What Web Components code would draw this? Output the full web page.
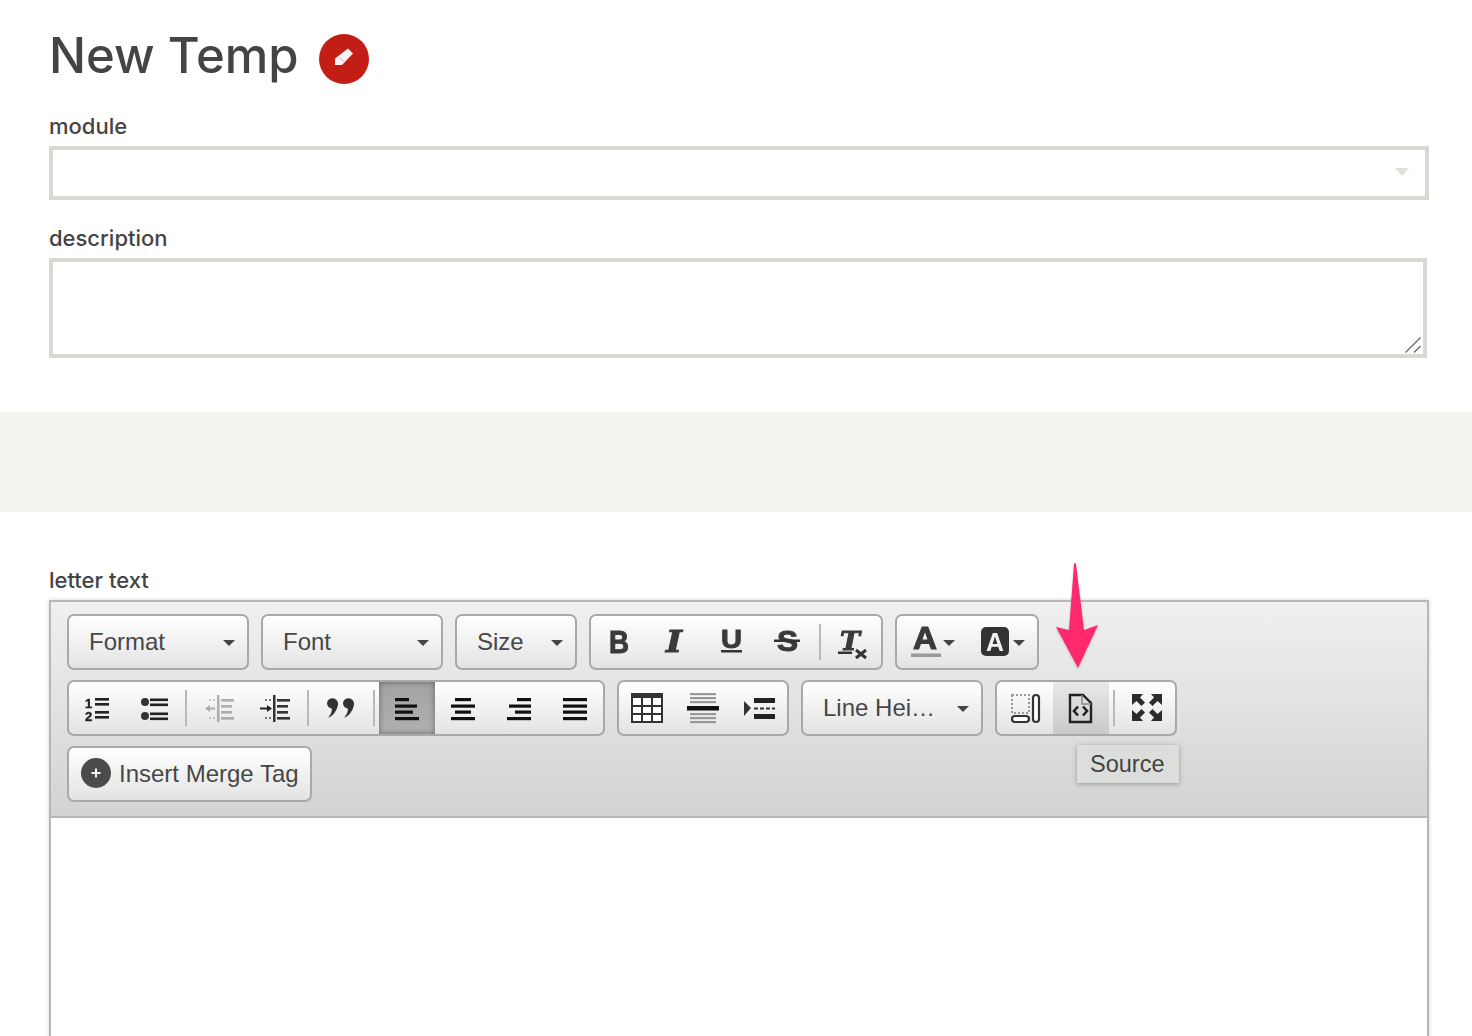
<!DOCTYPE html>
<html>
<head>
<meta charset="utf-8">
<title>New Temp</title>
<style>
  html, body { margin: 0; padding: 0; height: 1036px; overflow: hidden; background: #fff; }
  body { position: relative; font-family: "Liberation Sans", Arial, sans-serif; }
  .narrow { display: block; padding: 0 43px 0 49px; }
  .narrow.top { padding-top: 34px; }
</style>
</head>
<body>
  <div class="narrow top">
    <page-title>New Temp</page-title>
    <form-field label="module" kind="select"></form-field>
    <form-field label="description" kind="textarea"></form-field>
  </div>
  <gray-band></gray-band>
  <div class="narrow">
    <form-field label="letter text" kind="editor">
      <rich-editor>
        <tb-row>
          <tb-combo width="182">Format</tb-combo>
          <tb-combo width="182">Font</tb-combo>
          <tb-combo width="122">Size</tb-combo>
          <tb-group>
            <tb-btn icon="bold"></tb-btn>
            <tb-btn icon="italic"></tb-btn>
            <tb-btn icon="underline"></tb-btn>
            <tb-btn icon="strike"></tb-btn>
            <tb-sep></tb-sep>
            <tb-btn icon="clear"></tb-btn>
          </tb-group>
          <tb-group>
            <tb-btn icon="textcolor" width="70"></tb-btn>
            <tb-btn icon="bgcolor" width="70"></tb-btn>
          </tb-group>
        </tb-row>
        <tb-row>
          <tb-group>
            <tb-btn icon="ol"></tb-btn>
            <tb-btn icon="ul"></tb-btn>
            <tb-sep></tb-sep>
            <tb-btn icon="outdent"></tb-btn>
            <tb-btn icon="indent"></tb-btn>
            <tb-sep></tb-sep>
            <tb-btn icon="quote"></tb-btn>
            <tb-sep></tb-sep>
            <tb-btn icon="left" state="on"></tb-btn>
            <tb-btn icon="center"></tb-btn>
            <tb-btn icon="right"></tb-btn>
            <tb-btn icon="justify"></tb-btn>
          </tb-group>
          <tb-group>
            <tb-btn icon="table"></tb-btn>
            <tb-btn icon="hr"></tb-btn>
            <tb-btn icon="pagebreak"></tb-btn>
          </tb-group>
          <tb-combo width="182">Line Hei…</tb-combo>
          <tb-group>
            <tb-btn icon="blocks"></tb-btn>
            <tb-btn icon="source" state="hover" tip="Source"></tb-btn>
            <tb-sep></tb-sep>
            <tb-btn icon="maximize"></tb-btn>
          </tb-group>
        </tb-row>
        <tb-row>
          <merge-tag>Insert Merge Tag</merge-tag>
        </tb-row>
      </rich-editor>
    </form-field>
  </div>
  <callout-arrow></callout-arrow>

<script>
const INK = 'fill="#3a3a3a" stroke="#3a3a3a" stroke-width="1"';
const TEXT_BOLD = 'font-family="Liberation Sans" font-weight="700"';
const SERIF_IT = 'font-family="DejaVu Serif" font-weight="700" font-style="italic"';

const lines = (rows, fill = '#222', h = 2.6) =>
  rows.map(([x, y, w]) => `<rect x="${x}" y="${y}" width="${w}" height="${h}" fill="${fill}"/>`).join('');

const indentIcon = (arrow) => `
  ${arrow}
  <rect x="14" y="3" width="2.500" height="27" fill="#333"/>
  ${lines([[18, 7, 13], [18, 13, 11], [18, 19, 11], [18, 25, 13]], '#333', 2.6)}
  <rect x="6" y="7" width="2" height="2" fill="#777"/><rect x="10" y="7" width="2" height="2" fill="#777"/>
  <rect x="6" y="25" width="2" height="2" fill="#777"/><rect x="10" y="25" width="2" height="2" fill="#777"/>`;

const corner = 'M1 2H12L9 5.500L14 10.500L10.500 14L5.500 9L1 13Z';

const ICONS = {
  bold: `<text x="6" y="27" font-size="32" ${TEXT_BOLD} ${INK} textLength="20" lengthAdjust="spacingAndGlyphs">B</text>`,
  italic: `<text x="7" y="26" font-size="29" ${SERIF_IT} ${INK} textLength="16" lengthAdjust="spacingAndGlyphs">I</text>`,
  underline: `<text x="6" y="22" font-size="26" ${TEXT_BOLD} ${INK} textLength="21" lengthAdjust="spacingAndGlyphs">U</text><rect x="6" y="24" width="21" height="2.500" fill="#333"/>`,
  strike: `<text x="6" y="25" font-size="29" ${TEXT_BOLD} ${INK} textLength="21" lengthAdjust="spacingAndGlyphs">S</text><rect x="3" y="13.500" width="26" height="2.500" fill="#333"/>`,
  clear: `<text x="3" y="24" font-size="26" ${SERIF_IT} ${INK} textLength="20" lengthAdjust="spacingAndGlyphs">T</text><rect x="1" y="25.500" width="14" height="2.500" fill="#333"/><path d="M19 24L29 32M29 24L19 32" stroke="#333" stroke-width="3"/>`,
  textcolor: {
    w: 46,
    svg: `<text x="4" y="23" font-size="31" ${TEXT_BOLD} ${INK} textLength="24" lengthAdjust="spacingAndGlyphs">A</text><rect x="2" y="27.500" width="30" height="3.500" fill="#999"/><path d="M34 14H46L40 20Z" fill="#444"/>`
  },
  bgcolor: {
    w: 46,
    svg: `<rect x="2" y="1" width="28" height="29" rx="5" fill="#333"/><text x="7" y="25" font-size="26" ${TEXT_BOLD} fill="#f2f2f2" textLength="18" lengthAdjust="spacingAndGlyphs">A</text><path d="M34 14H46L40 20Z" fill="#444"/>`
  },
  ol: `<text x="4" y="16" font-size="13" ${TEXT_BOLD} fill="#222" stroke="#222" stroke-width=".4">1</text><text x="4" y="29" font-size="13" ${TEXT_BOLD} fill="#222" stroke="#222" stroke-width=".4">2</text>${lines([[14, 6, 14], [14, 11, 14], [14, 19, 14], [14, 24, 14]])}`,
  ul: `<circle cx="8" cy="10" r="4" fill="#333"/><circle cx="8" cy="24" r="4" fill="#333"/>${lines([[13, 6.500, 18], [13, 11.500, 18], [13, 20.500, 18], [13, 25.500, 18]])}`,
  outdent: {
    opacity: .35,
    svg: indentIcon('<path d="M2 16.500L7 13V15.500H12V17.500H7V20Z" fill="#333"/>')
  },
  indent: indentIcon('<path d="M13 16.500L8 13V15.500H1V17.500H8V20Z" fill="#222"/>'),
  quote: `<path d="M2 11a5.500 5.500 0 1 1 11 1.500C12 19 8 24 3 26C6 22 7 19 7 16.500C4.500 16.500 2 14 2 11Z" fill="#333"/><path d="M18 11a5.500 5.500 0 1 1 11 1.500C28 19 24 24 19 26C22 22 23 19 23 16.500C20.500 16.500 18 14 18 11Z" fill="#333"/>`,
  left: lines([[0, 6, 14], [0, 12.500, 22], [0, 18.500, 18], [0, 25, 24]], '#111', 3.2),
  center: lines([[4, 6, 16], [0, 12.500, 24], [4, 18.500, 16], [0, 25, 24]], '#111', 3.2),
  right: lines([[10, 6, 14], [2, 12.500, 22], [8, 18.500, 16], [0, 25, 24]], '#111', 3.2),
  justify: lines([[0, 6, 24], [0, 12.500, 24], [0, 18.500, 24], [0, 25, 24]], '#111', 3.2),
  table: `<rect x="1" y="2" width="30" height="28" fill="#fff" stroke="#333" stroke-width="2"/><rect x="0" y="1" width="32" height="5" fill="#333"/><path d="M11 6V30M21 6V30M1 14H31M1 22H31" stroke="#333" stroke-width="2"/>`,
  hr: `${lines([[3, 1, 26], [3, 5, 26], [3, 9, 26], [3, 21, 26], [3, 25, 26], [3, 29, 26]], '#999', 2.2)}<rect x="0" y="14" width="32" height="4.500" fill="#111"/>`,
  pagebreak: `<path d="M1 9L8 16L1 24Z" fill="#333"/><rect x="11" y="6" width="21" height="5" fill="#222"/><rect x="11" y="22" width="21" height="5" fill="#222"/><path d="M11 16.500H32" stroke="#333" stroke-width="2" stroke-dasharray="4 2"/>`,
  blocks: `<rect x="3" y="3" width="17" height="18" fill="none" stroke="#999" stroke-width="2" stroke-dasharray="2 2"/><rect x="24" y="3" width="6" height="27" rx="3" fill="#fff" stroke="#333" stroke-width="2.200"/><rect x="3" y="24" width="17" height="6" rx="3" fill="#fff" stroke="#333" stroke-width="2.200"/>`,
  source: `<path d="M5 3H18L26 11V30H5Z" fill="none" stroke="#222" stroke-width="2.400"/><path d="M17 3V12H26" fill="none" stroke="#888" stroke-width="1.500"/><path d="M13 14.500L9 19L13 23.500M18 14.500L22 19L18 23.500" fill="none" stroke="#222" stroke-width="2.600"/>`,
  maximize: `<g fill="#2c2c2c"><path d="${corner}"/><path d="${corner}" transform="translate(32 0) scale(-1 1)"/><path d="${corner}" transform="translate(0 31) scale(1 -1)"/><path d="${corner}" transform="translate(32 31) scale(-1 -1)"/></g>`
};

class PageTitle extends HTMLElement {
  constructor() {
    super();
    this.attachShadow({ mode: 'open' }).innerHTML = `
    <style>
      :host { display: flex; align-items: center; gap: 21px; height: 50px; margin-bottom: 30px; }
      h1 { margin: 0; font: 500 49px/50px Inter, sans-serif; color: #444; position: relative; top: -3px; }
      svg { display: block; }
    </style>
    <h1><slot></slot></h1>
    <svg width="50" height="50" viewBox="0 0 50 50">
      <circle cx="25" cy="25" r="25" fill="#c21e16"/>
      <path d="M29 14.500L34 19.500L23 31H16V24.500Z" fill="#fff" opacity=".95"/>
      <path d="M21 24L26 28.500" stroke="#e2b0ad" stroke-width="1"/>
    </svg>
    `;
  }
}

class FormField extends HTMLElement {
  constructor() {
    super();
    const kind = this.getAttribute('kind');
    this.attachShadow({ mode: 'open' }).innerHTML = `
    <style>
      :host { display: block; margin-bottom: 26px; }
      label { display: block; font: 500 22px/26px Inter, sans-serif; color: #444; margin-bottom: 6px; position: relative; top: -1px; }
      .box { box-sizing: border-box; border: 4px solid #d8d9d1; background: #fff; position: relative; }
      .select { height: 54px; width: 1380px; }
      .select i { position: absolute; right: 16px; top: 18px; border: 7px solid transparent; border-top: 8px solid #dfe0da; border-bottom: 0; }
      .textarea { height: 100px; width: 1378px; }
      .textarea svg { position: absolute; right: 0; bottom: 0; }
    </style>
    <label>${this.getAttribute('label')}</label>
    ${kind === 'select' ? '<div class="box select"><i></i></div>' : ''}
    ${kind === 'textarea' ? `<div class="box textarea"><svg width="18" height="18" viewBox="0 0 18 18"><path d="M0.500 16.500L15.500 1.500M9 16.500L15.500 10" stroke="#666" stroke-width="1.300"/></svg></div>` : ''}
    ${kind === 'editor' ? '<slot></slot>' : ''}
    `;
  }
}

class GrayBand extends HTMLElement {
  constructor() {
    super();
    this.attachShadow({ mode: 'open' }).innerHTML = `
    <style>
      :host { display: block; height: 100px; background: #f3f4ef; margin: 54px 0 56px; }
    </style>
    `;
  }
}

class RichEditor extends HTMLElement {
  constructor() {
    super();
    this.attachShadow({ mode: 'open' }).innerHTML = `
    <style>
      :host { display: block; width: 1380px; box-sizing: border-box; border: 2px solid #b7b7b7; background: #fff; box-shadow: 0 0 4px rgba(0,0,0,.18); }
      .toolbar { display: flex; flex-direction: column; gap: 10px; padding: 12px 16px 14px;
        background: linear-gradient(#f0f0f0, #d2d3d2); border-bottom: 2px solid #b7b7b7; }
      .content { height: 320px; background: #fff; }
    </style>
    <div class="toolbar"><slot></slot></div>
    <div class="content"></div>
    `;
  }
}

class TbRow extends HTMLElement {
  constructor() {
    super();
    this.attachShadow({ mode: 'open' }).innerHTML = `
    <style>:host { display: flex; gap: 12px; height: 56px; }</style>
    <slot></slot>
    `;
  }
}

const GROUP_BOX = `
  box-sizing: border-box; height: 56px; border: 2px solid #a9a9a9; border-radius: 7px;
  background: linear-gradient(#ffffff, #e3e3e3);`;

class TbGroup extends HTMLElement {
  constructor() {
    super();
    this.attachShadow({ mode: 'open' }).innerHTML = `
    <style>:host { display: flex; ${GROUP_BOX} overflow: visible; }</style>
    <slot></slot>
    `;
  }
}

class TbSep extends HTMLElement {
  constructor() {
    super();
    this.attachShadow({ mode: 'open' }).innerHTML = `
    <style>
      :host { display: flex; width: 10px; justify-content: center; align-items: center; }
      i { display: block; width: 2px; height: 36px; background: #b9b9b9; }
    </style>
    <i></i>
    `;
  }
}

class TbBtn extends HTMLElement {
  constructor() {
    super();
    const raw = ICONS[this.getAttribute('icon')];
    const icon = typeof raw === 'string' ? { svg: raw } : raw;
    const w = icon.w || (['left', 'center', 'right', 'justify'].includes(this.getAttribute('icon')) ? 24 : 32);
    const tip = this.getAttribute('tip');
    this.attachShadow({ mode: 'open' }).innerHTML = `
    <style>
      :host { display: flex; position: relative; align-items: center; justify-content: center; box-sizing: border-box;
        width: ${this.getAttribute('width') || 56}px; height: 52px; }
      :host([state="on"]) { background: linear-gradient(#a3a3a3, #b0b0b0); box-shadow: inset 0 0 6px rgba(0,0,0,.4); }
      :host([state="hover"]) { background: linear-gradient(#e9e9e9, #c8c9c8); }
      svg { display: block; overflow: visible; filter: blur(.55px); opacity: ${icon.opacity || 1}; }
      .tip { position: absolute; left: 24px; top: 63px; width: 102px; height: 38px; box-sizing: border-box; padding-left: 13px;
        background: #dcdedc; box-shadow: 0 1px 5px rgba(0,0,0,.3); font: 23.5px/38px "Liberation Sans", sans-serif; color: #444; }
    </style>
    <svg width="${w}" height="32" viewBox="0 0 ${w} 32">${icon.svg}</svg>
    ${tip ? `<div class="tip">${tip}</div>` : ''}
    `;
  }
}

class TbCombo extends HTMLElement {
  constructor() {
    super();
    this.attachShadow({ mode: 'open' }).innerHTML = `
    <style>
      :host { display: flex; align-items: center; justify-content: space-between; width: ${this.getAttribute('width')}px;
        ${GROUP_BOX} padding: 0 12px 0 20px; font: 24px/1 "Liberation Sans", sans-serif; color: #474747; }
      i { display: block; border: 6px solid transparent; border-top: 6px solid #444; border-bottom: 0; margin-top: 2px; }
    </style>
    <span><slot></slot></span><i></i>
    `;
  }
}

class MergeTag extends HTMLElement {
  constructor() {
    super();
    this.attachShadow({ mode: 'open' }).innerHTML = `
    <style>
      :host { display: flex; align-items: center; gap: 8px; width: 245px;
        ${GROUP_BOX} padding-left: 12px; font: 24px/1 "Liberation Sans", sans-serif; color: #474747; white-space: nowrap; }
      svg { display: block; flex: none; margin-top: -2px; }
    </style>
    <svg width="30" height="30" viewBox="0 0 30 30">
      <circle cx="15" cy="15" r="15" fill="#4b4b4b"/>
      <path d="M15 10.500V19.500M10.500 15H19.500" stroke="#f4f4f4" stroke-width="2"/>
    </svg>
    <span><slot></slot></span>
    `;
  }
}

class CalloutArrow extends HTMLElement {
  constructor() {
    super();
    this.attachShadow({ mode: 'open' }).innerHTML = `
    <style>
      :host { display: block; position: absolute; left: 1050px; top: 558px; width: 56px; height: 116px; }
      svg { display: block; filter: drop-shadow(0 1px 1px rgba(0,0,0,.2)); }
    </style>
    <svg width="56" height="116" viewBox="0 0 56 116">
      <path d="M24 6Q25 4 26 6L34 72L48 67L28 110L6 69L19 72Z" fill="#ff2a6d"/>
    </svg>
    `;
  }
}

customElements.define('page-title', PageTitle);
customElements.define('form-field', FormField);
customElements.define('gray-band', GrayBand);
customElements.define('rich-editor', RichEditor);
customElements.define('tb-row', TbRow);
customElements.define('tb-group', TbGroup);
customElements.define('tb-sep', TbSep);
customElements.define('tb-btn', TbBtn);
customElements.define('tb-combo', TbCombo);
customElements.define('merge-tag', MergeTag);
customElements.define('callout-arrow', CalloutArrow);
</script>
</body>
</html>
